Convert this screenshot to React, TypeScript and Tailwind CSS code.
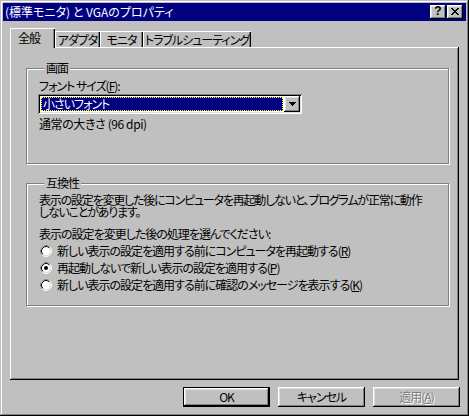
import React from "react";

const raised =
  "shadow-[inset_-1px_-1px_#000,inset_1px_1px_#fff,inset_-2px_-2px_#808080,inset_2px_2px_#dfdfdf]";

function Radio({checked, children}: {checked?: boolean; children: React.ReactNode}) {
  return (
    <div className="flex items-center h-[17px] whitespace-nowrap">
      <svg width="12" height="12" viewBox="0 0 12 12" className="ml-[1px] mr-[5px] shrink-0">
        <circle cx="6" cy="6" r="5.5" fill="none" stroke="#fff" />
        <path d="M2.11 9.89 A5.5 5.5 0 0 1 9.89 2.11" fill="none" stroke="#808080" />
        <circle cx="6" cy="6" r="4.5" fill="#fff" stroke="#dfdfdf" />
        <path d="M2.82 9.18 A4.5 4.5 0 0 1 9.18 2.82" fill="none" stroke="#000" />
        {checked && <circle cx="6" cy="6" r="2" fill="#000" />}
      </svg>
      <span>{children}</span>
    </div>
  );
}

function Key({k}: {k: string}) {
  return (
    <>
      (<span className="underline underline-offset-1">{k}</span>)
    </>
  );
}

export default function App() {
  return (
    <div className="w-[469px] h-[416px] bg-[#c0c0c0] p-[3px] flex flex-col text-[12px] leading-[14px] text-black font-['Noto_Sans_CJK_JP',sans-serif] [font-feature-settings:'palt'] shadow-[inset_-1px_-1px_#000,inset_1px_1px_#c0c0c0,inset_-2px_-2px_#808080,inset_2px_2px_#fff]">
      {/* title bar */}
      <div className="h-[18px] bg-[#000080] flex items-center justify-between pl-[2px] pr-[3px]">
        <span className="text-white whitespace-nowrap">(標準モニタ) と VGAのプロパティ</span>
        <div className="flex gap-[1px]">
          <div className={`w-[16px] h-[14px] bg-[#c0c0c0] flex items-center justify-center ${raised}`}>
            <span className="font-['Liberation_Sans',sans-serif] font-bold text-[12px] leading-[11px] -mt-px">?</span>
          </div>
          <div className={`w-[16px] h-[14px] bg-[#c0c0c0] flex items-center justify-center ${raised}`}>
            <svg width="8" height="7" viewBox="0 0 8 7" shapeRendering="crispEdges" className="-mt-px">
              <path d="M0 0h2v1h-2zM6 0h2v1h-2zM1 1h2v1h-2zM5 1h2v1h-2zM2 2h4v1h-4zM3 3h2v1h-2zM2 4h4v1h-4zM1 5h2v1h-2zM5 5h2v1h-2zM0 6h2v1h-2zM6 6h2v1h-2z" fill="#000" />
            </svg>
          </div>
        </div>
      </div>

      <div className="flex flex-col px-[7px] pt-[7px] tracking-[-1px]">
        {/* tabs */}
        <div className="flex items-end h-[20px]">
          <div className="relative z-10 w-[45px] h-[20px] bg-[#c0c0c0] pl-[8px] pt-[3px] shadow-[inset_1px_1px_#fff,inset_-1px_0_#000,inset_-2px_0_#808080]">
            全般
          </div>
          <div className="w-[45px] h-[17px] text-center pt-[2px] shadow-[inset_1px_1px_#fff,inset_-1px_0_#000,inset_-2px_0_#808080]">
            アダプタ
          </div>
          <div className="w-[43px] h-[17px] text-center pt-[2px] shadow-[inset_1px_1px_#fff,inset_-1px_0_#000,inset_-2px_0_#808080]">
            モニタ
          </div>
          <div className="w-[108px] h-[17px] text-center pt-[2px] whitespace-nowrap shadow-[inset_1px_1px_#fff,inset_-1px_0_#000,inset_-2px_0_#808080]">
            トラブルシューティング
          </div>
        </div>

        {/* page */}
        <div className="-mt-px h-[333px] w-[449px] pl-[16px] pt-[13px] shadow-[inset_-1px_-1px_#000,inset_1px_1px_#fff,inset_-2px_-2px_#808080]">
          <fieldset className="w-[423px] h-[104px] border border-[#808080] pl-[12px] shadow-[inset_1px_1px_#fff,1px_1px_#fff]">
            <legend className="ml-[5px] px-[2px] leading-[16px] bg-[#c0c0c0]">画面</legend>
            <div className="mt-[3px]">
              フォント サイズ<Key k="F" />:
            </div>
            <div className="mt-[1px] -ml-px w-[264px] h-[20px] p-[2px] bg-white flex shadow-[inset_1px_1px_#808080,inset_-1px_-1px_#fff,inset_2px_2px_#000,inset_-2px_-2px_#dfdfdf]">
              <div className="flex-1 p-[1px]">
                <div className="h-full bg-[#000080] border border-dotted border-[#ffff00] text-white pl-[1px] leading-[12px]">
                  小さいフォント
                </div>
              </div>
              <div className={`w-[16px] h-[16px] bg-[#c0c0c0] flex items-center justify-center ${raised}`}>
                <svg width="7" height="4" viewBox="0 0 7 4" shapeRendering="crispEdges">
                  <path d="M0 0h7v1h-7zM1 1h5v1h-5zM2 2h3v1h-3zM3 3h1v1h-1z" fill="#000" />
                </svg>
              </div>
            </div>
            <div className="mt-[3px] tracking-[-0.4px]">通常の大きさ (96 dpi)</div>
          </fieldset>

          <fieldset className="mt-[11px] w-[423px] h-[131px] border border-[#808080] pl-[12px] shadow-[inset_1px_1px_#fff,1px_1px_#fff]">
            <legend className="ml-[5px] px-[2px] leading-[16px] bg-[#c0c0c0]">互換性</legend>
            <p className="mt-[3px] leading-[12px] whitespace-pre tracking-[-1.2px]">
              {"表示の設定を変更した後にコンピュータを再起動しないと、プログラムが正常に動作\nしないことがあります。"}
            </p>
            <div className="mt-[10px] leading-[12px] whitespace-nowrap">表示の設定を変更した後の処理を選んでください:</div>
            <div className="mt-[2px] flex flex-col">
              <Radio>
                新しい表示の設定を適用する前にコンピュータを再起動する<Key k="R" />
              </Radio>
              <Radio checked>
                再起動しないで新しい表示の設定を適用する<Key k="P" />
              </Radio>
              <Radio>
                新しい表示の設定を適用する前に確認のメッセージを表示する<Key k="K" />
              </Radio>
            </div>
          </fieldset>
        </div>

        {/* buttons */}
        <div className="mt-[7px] -mr-px flex justify-end gap-[8px]">
          <div className="w-[87px] h-[20px] border border-black">
            <div className={`h-full flex items-center justify-center ${raised}`}>OK</div>
          </div>
          <div className={`w-[87px] h-[20px] flex items-center justify-center ${raised}`}>キャンセル</div>
          <div className={`w-[87px] h-[20px] flex items-center justify-center text-[#808080] [text-shadow:1px_1px_#fff] ${raised}`}>
            <span>
              適用<Key k="A" />
            </span>
          </div>
        </div>
      </div>
    </div>
  );
}
